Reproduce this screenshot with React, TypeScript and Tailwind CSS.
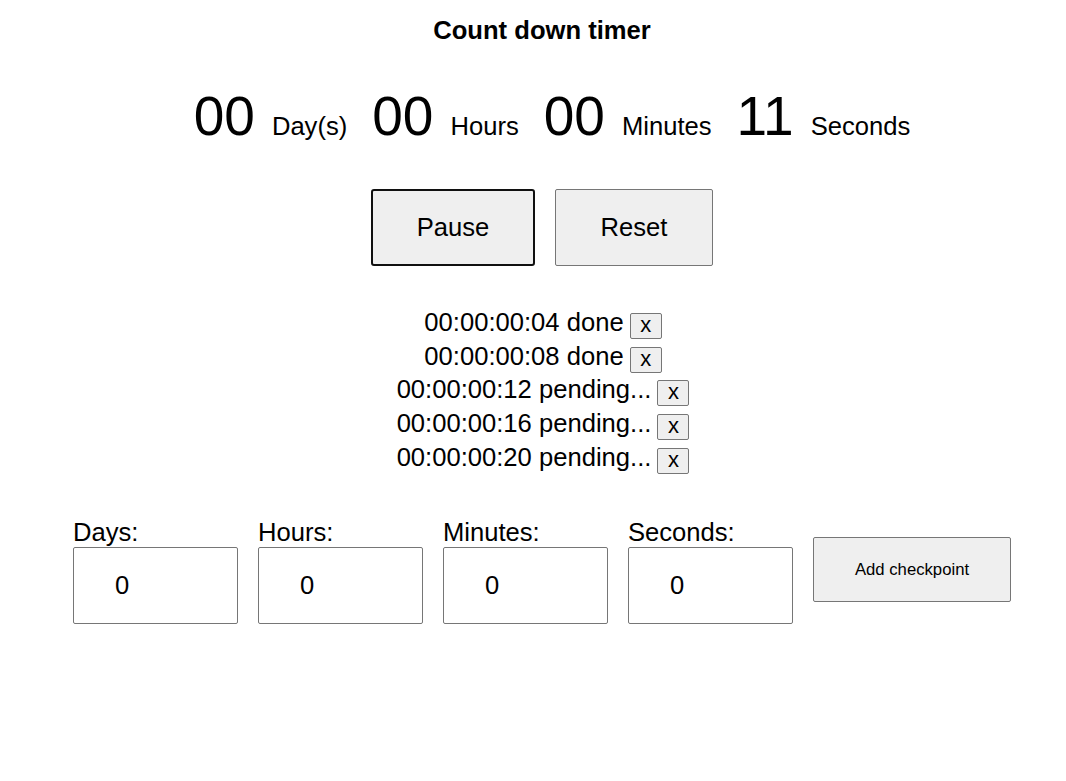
import React from "react";

const units = [
  { v: "00", l: "Day(s)" },
  { v: "00", l: "Hours" },
  { v: "00", l: "Minutes" },
  { v: "11", l: "Seconds" },
];

const checkpoints = [
  "00:00:00:04 done",
  "00:00:00:08 done",
  "00:00:00:12 pending...",
  "00:00:00:16 pending...",
  "00:00:00:20 pending...",
];

const fields = ["Days:", "Hours:", "Minutes:", "Seconds:"];

export default function App() {
  return (
    <div
      className="w-[1066px] h-[781px] bg-white text-black pl-[18px] flex flex-col items-center"
      style={{ fontFamily: '"Liberation Sans", Arial, sans-serif' }}
    >
      <h1 className="mt-[15px] text-[25.6px] leading-[30px] font-bold">Count down timer</h1>

      <div className="mt-[43px] flex items-baseline pl-[20px]">
        {units.map((u, i) => (
          <div key={i} className="flex items-baseline">
            <span className={(i === 0 ? "" : "ml-[25px] ") + "text-[55px] leading-[56px]"}>{u.v}</span>
            <span className="ml-[17px] text-[25.6px] leading-[30px]">{u.l}</span>
          </div>
        ))}
      </div>

      <div className="mt-[45px] flex gap-[20px]">
        <button className="w-[164px] h-[77px] bg-[#efefef] border-2 border-[#101010] rounded-[3px] text-[25.6px]">
          Pause
        </button>
        <button className="w-[158px] h-[77px] bg-[#efefef] border border-[#767676] rounded-[2px] text-[25.6px]">
          Reset
        </button>
      </div>

      <div className="mt-[43px] flex flex-col items-center pl-[2px]">
        {checkpoints.map((c, i) => (
          <div key={i} className="h-[33.75px] flex items-center">
            <span className="text-[25.6px] leading-[30px] mb-[8px]">{c}</span>
            <button className="ml-[6px] w-[32px] h-[26px] bg-[#efefef] border border-[#767676] rounded-[2px] text-[22px] leading-[20px] flex items-center justify-center pb-[2px]">
              x
            </button>
          </div>
        ))}
      </div>

      <div className="mt-[40px] flex items-center gap-[20px]">
        {fields.map((f) => (
          <div key={f} className="flex flex-col">
            <label className="text-[25.6px] leading-[29.4px]">{f}</label>
            <div className="w-[165px] h-[77px] border border-[#767676] rounded-[2px] pl-[41px] flex items-center text-[25.6px]">
              0
            </div>
          </div>
        ))}
        <button className="w-[198px] h-[65px] bg-[#efefef] border border-[#767676] rounded-[2px] text-[16.7px] mb-[2px]">
          Add checkpoint
        </button>
      </div>
    </div>
  );
}
